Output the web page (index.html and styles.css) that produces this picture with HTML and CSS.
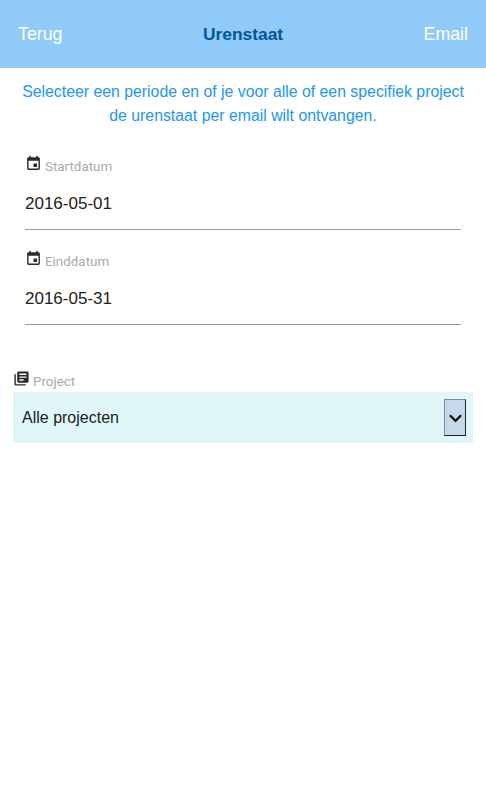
FILE: index.html
```html
<!DOCTYPE html>
<html lang="nl">
<head>
    <meta charset="UTF-8">
    <meta name="viewport" content="width=device-width, initial-scale=1.0">
    <title>Urenstaat</title>
    <link rel="stylesheet" href="styles.css">
</head>
<body>
    <header class="topbar">
        <span class="topbar-link">Terug</span>
        <h1 class="topbar-title">Urenstaat</h1>
        <span class="topbar-link">Email</span>
    </header>

    <p class="intro">Selecteer een periode en of je voor alle of een specifiek project<br>de urenstaat per email wilt ontvangen.</p>

    <div class="dates">
        <div class="field">
            <div class="field-label">
                <svg class="icon" viewBox="0 0 24 24"><path d="M17 12h-5v5h5v-5zM16 1v2H8V1H6v2H5c-1.11 0-1.99.9-1.99 2L3 19c0 1.1.89 2 2 2h14c1.1 0 2-.9 2-2V5c0-1.1-.9-2-2-2h-1V1h-2zm3 18H5V8h14v11z"/></svg>
                <span>Startdatum</span>
            </div>
            <div class="field-value">2016-05-01</div>
        </div>
        <div class="field">
            <div class="field-label">
                <svg class="icon" viewBox="0 0 24 24"><path d="M17 12h-5v5h5v-5zM16 1v2H8V1H6v2H5c-1.11 0-1.99.9-1.99 2L3 19c0 1.1.89 2 2 2h14c1.1 0 2-.9 2-2V5c0-1.1-.9-2-2-2h-1V1h-2zm3 18H5V8h14v11z"/></svg>
                <span>Einddatum</span>
            </div>
            <div class="field-value">2016-05-31</div>
        </div>
    </div>

    <div class="project">
        <div class="field-label">
            <svg class="icon" viewBox="0 0 24 24"><path d="M4 6H2v14c0 1.1.9 2 2 2h14v-2H4V6zm16-4H8c-1.1 0-2 .9-2 2v12c0 1.1.9 2 2 2h12c1.1 0 2-.9 2-2V4c0-1.1-.9-2-2-2zm-1 9H9V9h10v2zm-4 4H9v-2h6v2zm4-8H9V5h10v2z"/></svg>
            <span>Project</span>
        </div>
        <div class="select">
            <span class="select-text">Alle projecten</span>
            <span class="select-btn">
                <svg viewBox="0 0 16 10"><path d="M2 2l6 6 6-6" fill="none" stroke="#111" stroke-width="2.4"/></svg>
            </span>
        </div>
    </div>
</body>
</html>
```

FILE: styles.css
```css
* {
    margin: 0;
    padding: 0;
    box-sizing: border-box;
    font-family: 'Liberation Sans', Arial, sans-serif;
}

body {
    background-color: #fff;
    color: #212121;
}

.topbar {
    display: flex;
    justify-content: space-between;
    align-items: center;
    height: 68px;
    padding: 0 18px;
    background-color: #90caf9;
}

.topbar-link {
    font-size: 17.8px;
    color: #fff;
}

.topbar-title {
    font-size: 17.4px;
    font-weight: bold;
    color: #01579b;
}

.intro {
    margin-top: 12px;
    font-size: 15.84px;
    line-height: 24px;
    text-align: center;
    color: #2196f3;
}

.dates {
    margin-top: 27px;
    padding: 0 25px;
}

.field {
    height: 95px;
}

.field-label {
    display: flex;
    align-items: center;
    gap: 3px;
    height: 20px;
    font-family: Roboto, sans-serif;
    font-size: 13.4px;
    color: #aaa;
}

.field-label span {
    font-family: Roboto, sans-serif;
    margin-top: 3px;
}

.icon {
    width: 17px;
    height: 17px;
    margin-bottom: 3px;
    fill: #2a2a2a;
}

.field-value {
    height: 55px;
    padding-top: 19px;
    font-size: 17px;
    line-height: 20px;
    border-bottom: 1px solid #999;
}

.project {
    margin-top: 25px;
    padding: 0 13px;
}

.select {
    display: flex;
    justify-content: space-between;
    align-items: center;
    height: 51px;
    margin-top: 2px;
    padding: 0 7px 0 9px;
    font-size: 16px;
    background-color: #e0f7fa;
}

.select-text {
    margin-top: 1px;
}

.select-btn {
    display: flex;
    align-items: center;
    justify-content: center;
    width: 22px;
    height: 37px;
    background-color: #c5d9ea;
    border: 1px solid #333;
    border-color: #888 #222 #222 #888;
}

.select-btn svg {
    width: 15px;
    height: 10px;
}
```
